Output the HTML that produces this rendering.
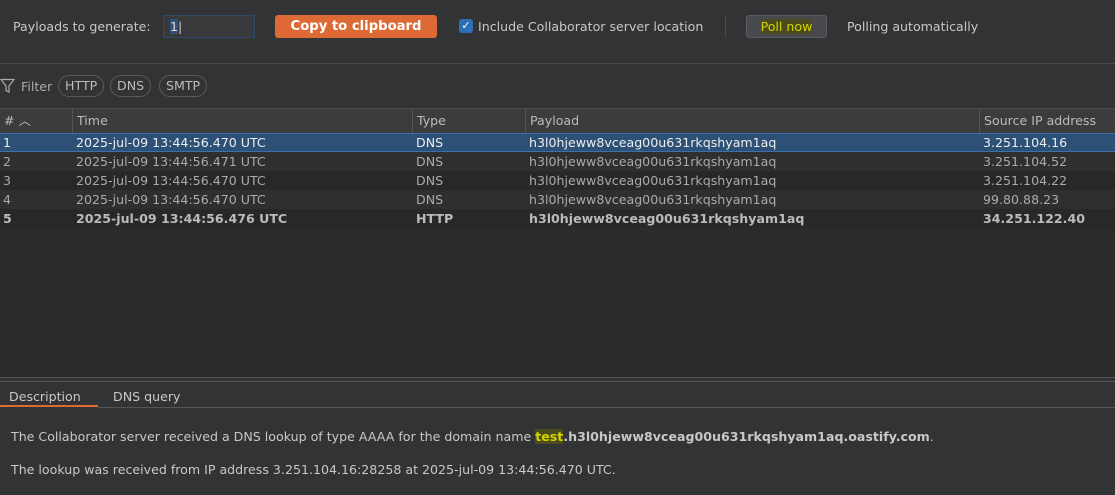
<!DOCTYPE html>
<html><head><style>
*{margin:0;padding:0;box-sizing:border-box}
body{width:1115px;height:495px;background:#323335;font-family:"DejaVu Sans","Liberation Sans",sans-serif;font-size:12.6px;color:#c8c8c8;position:relative;overflow:hidden}
.a{position:absolute;white-space:nowrap}
.tb{position:absolute;left:0;top:108px;width:1115px;height:270px;background:#2b2b2b}
.hdr{position:absolute;left:0;top:108px;width:1115px;height:25px;background:#3c3c3e;border-top:1px solid #4a4a4a}
.hdr div{position:absolute;top:0;height:25px;line-height:24px;padding-left:4px;border-left:1px solid #555;color:#bbb}
.row{position:absolute;left:0;width:1115px;height:19px;line-height:19px}
.row span{position:absolute;top:0}
.pill{position:absolute;top:75px;height:22px;border:1px solid #5a5a5a;border-radius:11px;line-height:20px;padding:0 6px;color:#bbb}
</style></head><body>
<div class="a" style="left:13px;top:19px;">Payloads to generate:</div>
<div class="a" style="left:163px;top:15px;width:92px;height:23px;border:1px solid #2d4a6b;background:#39393b;padding-left:6px;line-height:21px;"><span style="background:#2d4f78;color:#ddd">1</span>|</div>
<div class="a" style="left:275px;top:15px;width:162px;height:23px;background:#dd6a34;border-radius:3px;color:#fff;font-weight:bold;text-align:center;line-height:23px;font-size:13.2px">Copy to clipboard</div>
<div class="a" style="left:459px;top:19px;width:14px;height:14px;background:#2d6fb2;border-radius:3px;color:#fff;font-size:11px;line-height:14px;text-align:center">✓</div>
<div class="a" style="left:478px;top:19px;">Include Collaborator server location</div>
<div class="a" style="left:725px;top:15px;width:1px;height:23px;background:#4a4a4a"></div>
<div class="a" style="left:746px;top:15px;width:81px;height:23px;background:#47494c;border:1px solid #5a5c5f;border-radius:3px;text-align:center;line-height:21px;"><span style="background:#4b4b1e;color:#d4d400">Poll now</span></div>
<div class="a" style="left:847px;top:19px;">Polling automatically</div>
<div class="a" style="left:0;top:63px;width:1115px;height:1px;background:#4a4a4a"></div>
<svg class="a" style="left:0;top:78px" width="15" height="15" viewBox="0 0 15 15"><path d="M1 1.5h13L9 8v6L6 12.5V8z" fill="none" stroke="#aaa" stroke-width="1.2"/></svg>
<div class="a" style="left:21px;top:79px;color:#aaa">Filter</div>
<div class="pill" style="left:58px">HTTP</div>
<div class="pill" style="left:110px">DNS</div>
<div class="pill" style="left:159px">SMTP</div>
<div class="tb"></div>
<div class="hdr">
<div style="left:0;border-left:none">#&nbsp;︿</div>
<div style="left:72px;width:340px">Time</div>
<div style="left:412px;width:113px">Type</div>
<div style="left:525px;width:455px">Payload</div>
<div style="left:979px;width:136px">Source IP address</div>
</div>
<div class="row" style="top:133px;background:#2d5076;color:#eee;border-top:1px solid #3d70a8;border-bottom:1px solid #3d70a8;line-height:17px"><span style="left:3px">1</span><span style="left:76px">2025-jul-09 13:44:56.470 UTC</span><span style="left:416px">DNS</span><span style="left:529px">h3l0hjeww8vceag00u631rkqshyam1aq</span><span style="left:983px">3.251.104.16</span></div>
<div class="row" style="top:152px;background:#2f2f2f;color:#aaa"><span style="left:3px">2</span><span style="left:76px">2025-jul-09 13:44:56.471 UTC</span><span style="left:416px">DNS</span><span style="left:529px">h3l0hjeww8vceag00u631rkqshyam1aq</span><span style="left:983px">3.251.104.52</span></div>
<div class="row" style="top:171px;background:#282828;color:#aaa"><span style="left:3px">3</span><span style="left:76px">2025-jul-09 13:44:56.470 UTC</span><span style="left:416px">DNS</span><span style="left:529px">h3l0hjeww8vceag00u631rkqshyam1aq</span><span style="left:983px">3.251.104.22</span></div>
<div class="row" style="top:190px;background:#2f2f2f;color:#aaa"><span style="left:3px">4</span><span style="left:76px">2025-jul-09 13:44:56.470 UTC</span><span style="left:416px">DNS</span><span style="left:529px">h3l0hjeww8vceag00u631rkqshyam1aq</span><span style="left:983px">99.80.88.23</span></div>
<div class="row" style="top:209px;background:#282828;color:#bbb;font-weight:bold"><span style="left:3px">5</span><span style="left:76px">2025-jul-09 13:44:56.476 UTC</span><span style="left:416px">HTTP</span><span style="left:529px">h3l0hjeww8vceag00u631rkqshyam1aq</span><span style="left:983px">34.251.122.40</span></div>
<div class="a" style="left:0;top:377px;width:1115px;height:1px;background:#555"></div>
<div class="a" style="left:0;top:381px;width:1115px;height:1px;background:#555"></div>
<div class="a" style="left:9px;top:389px;">Description</div>
<div class="a" style="left:113px;top:389px;">DNS query</div>
<div class="a" style="left:0;top:405px;width:98px;height:2px;background:#dd6a34"></div>
<div class="a" style="left:98px;top:407px;width:1017px;height:1px;background:#555"></div>
<div class="a" style="left:11px;top:429px;">The Collaborator server received a DNS lookup of type AAAA for the domain name <b><span style="background:#4b4b1e;color:#d4d400">test</span>.h3l0hjeww8vceag00u631rkqshyam1aq.oastify.com</b>.</div>
<div class="a" style="left:11px;top:462px;">The lookup was received from IP address 3.251.104.16:28258 at 2025-jul-09 13:44:56.470 UTC.</div>
</body></html>
